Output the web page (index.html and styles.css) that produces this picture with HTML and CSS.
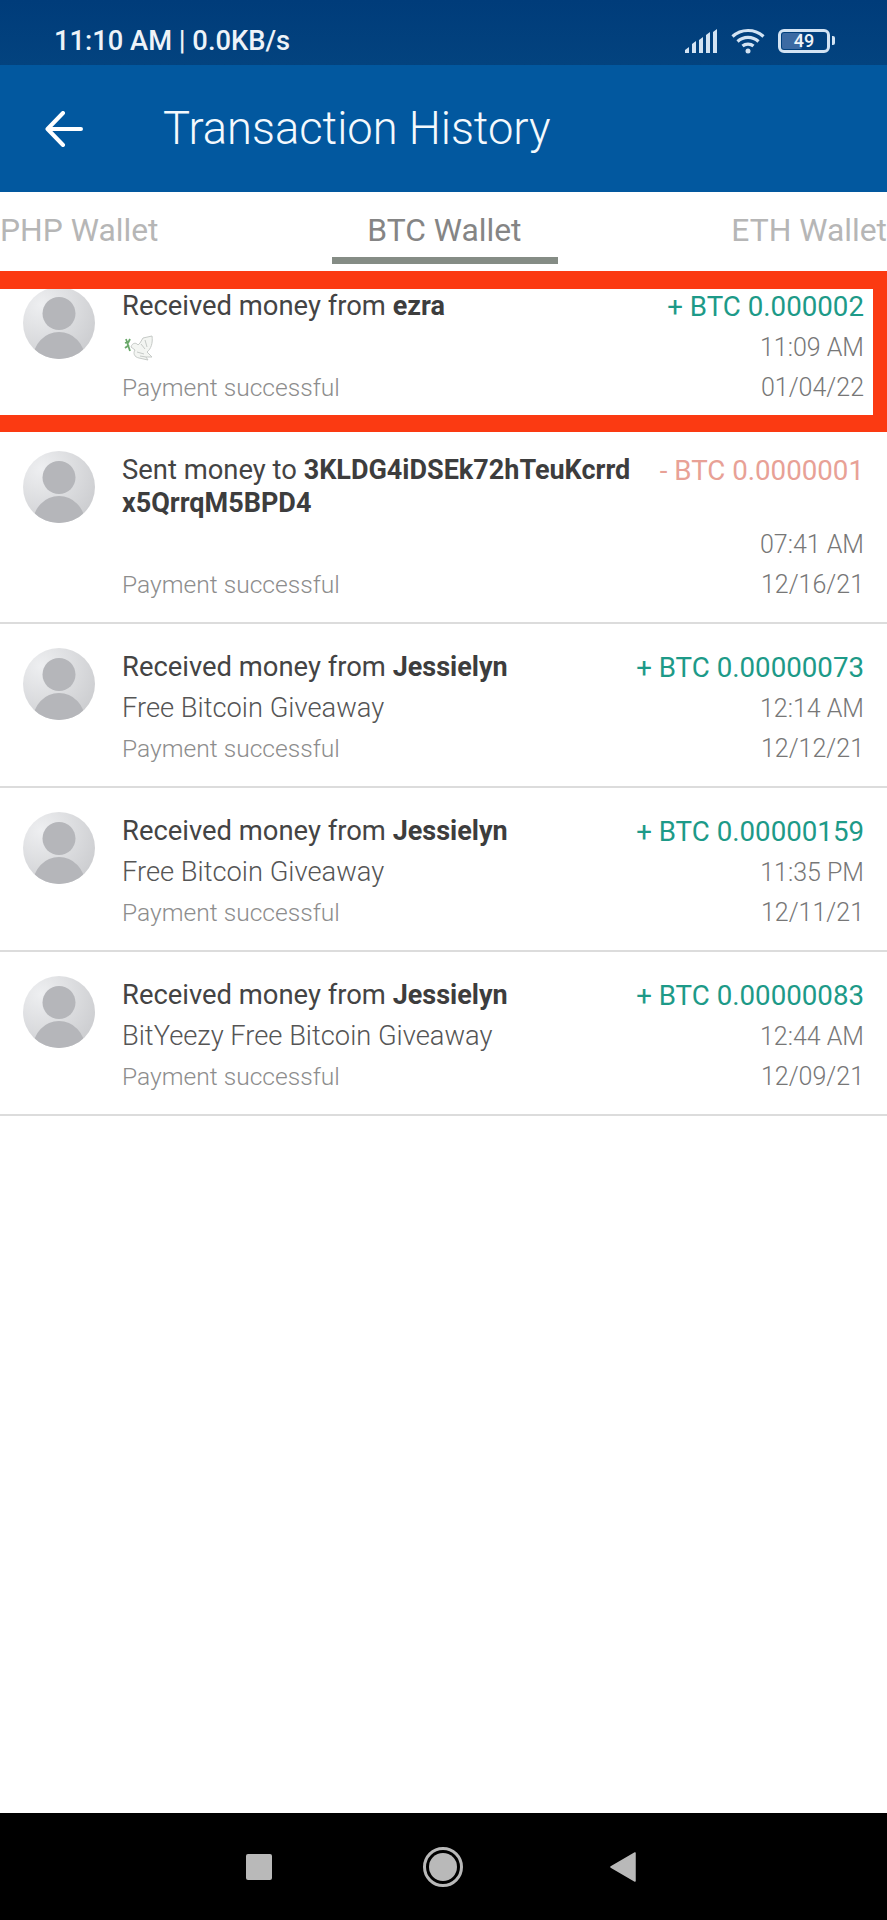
FILE: index.html
```html
<!DOCTYPE html>
<html lang="en">
<head>
<meta charset="utf-8">
<title>Transaction History</title>
<link rel="stylesheet" href="styles.css">
</head>
<body>
<div class="page">
  <svg width="0" height="0" class="defs">
    <defs>
      <radialGradient id="avbg" cx="0.25" cy="0.25" r="0.95">
        <stop offset="0" stop-color="#eeeff1"/>
        <stop offset="1" stop-color="#c9cacd"/>
      </radialGradient>
      <clipPath id="avclip"><circle cx="36" cy="36" r="36"/></clipPath>
      <symbol id="avatar" viewBox="0 0 72 72">
        <circle cx="36" cy="36" r="36" fill="url(#avbg)"/>
        <g clip-path="url(#avclip)" fill="#b5b6ba">
          <circle cx="36" cy="26.5" r="16.5"/>
          <ellipse cx="36" cy="72" rx="26" ry="27"/>
        </g>
      </symbol>
    </defs>
  </svg>

  <div class="status">
    <span class="status-text">11:10 AM | 0.0KB/s</span>
    <div class="status-icons">
      <svg class="ic-signal" width="33" height="24" viewBox="0 0 33 24" fill="#d3e3f3">
        <path d="M0 24v-3l4-3v6zM7 24v-9l4-3v12zM14 24V11l4-3v16zM21 24V6l4-3v21zM28 24V3l4-3v24z"/>
      </svg>
      <svg class="ic-wifi" width="34" height="26" viewBox="0 0 34 26" fill="none" stroke="#d3e3f3" stroke-width="3.2">
        <path d="M1.5 8.5C10 .5 24 .5 32.500 8.500"/>
        <path d="M6.500 13.500C12.500 8 21.500 8 27.500 13.500"/>
        <path d="M11.500 18C14.500 15.500 19.500 15.500 22.500 18"/>
        <circle cx="17" cy="23" r="2.500" fill="#d3e3f3" stroke="none"/>
      </svg>
      <div class="battery">
        <div class="battery-body"><span class="battery-fill"></span><span class="battery-num">49</span></div>
        <span class="battery-tip"></span>
      </div>
    </div>
  </div>

  <header class="appbar">
    <svg class="back" width="38" height="36" viewBox="0 0 38 36" fill="none" stroke="#fff" stroke-width="4" stroke-linecap="round" stroke-linejoin="round">
      <path d="M36 18H3M18 2 2.500 18 18 34"/>
    </svg>
    <h1 class="title">Transaction History</h1>
  </header>

  <nav class="tabs">
    <div class="tab">PHP Wallet</div>
    <div class="tab tab-active">BTC Wallet</div>
    <div class="tab">ETH Wallet</div>
  </nav>

  <main class="list">
    <div class="row">
      <svg class="avatar"><use href="#avatar"/></svg>
      <div class="line-title">Received money from <b>ezra</b></div>
      <div class="amount plus">+ BTC 0.000002</div>
      <div class="line-sub">
        <svg class="dove" width="33" height="26" viewBox="0 0 33 26">
          <path d="M9 12C10 8 14 7 16 10L18 8 21 3 30 1C31 8 29 14 25 17L30 22H24L26 25 17 23C12 22 11 18 13 15Z" fill="#f3f5f2" stroke="#c6cac7" stroke-width="1"/>
          <path d="M19 9 23 14M23 5 25 12M15 17 22 19M18 21 24 22" stroke="#c6cac7" stroke-width="1" fill="none"/>
          <path d="M4 4 8 16M3 8 6 7M3 13 7 10M8 4 6 8" stroke="#6aa86a" stroke-width="1.800" fill="none"/>
        </svg>
      </div>
      <div class="meta">11:09 AM</div>
      <div class="line-status">Payment successful</div>
      <div class="meta">01/04/22</div>
    </div>

    <div class="row">
      <svg class="avatar"><use href="#avatar"/></svg>
      <div class="line-title">Sent money to <b>3KLDG4iDSEk72hTeuKcrrd<br>x5QrrqM5BPD4</b></div>
      <div class="amount minus">- BTC 0.0000001</div>
      <div class="line-sub"></div>
      <div class="meta">07:41 AM</div>
      <div class="line-status">Payment successful</div>
      <div class="meta">12/16/21</div>
    </div>

    <div class="row">
      <svg class="avatar"><use href="#avatar"/></svg>
      <div class="line-title">Received money from <b>Jessielyn</b></div>
      <div class="amount plus">+ BTC 0.00000073</div>
      <div class="line-sub">Free Bitcoin Giveaway</div>
      <div class="meta">12:14 AM</div>
      <div class="line-status">Payment successful</div>
      <div class="meta">12/12/21</div>
    </div>

    <div class="row">
      <svg class="avatar"><use href="#avatar"/></svg>
      <div class="line-title">Received money from <b>Jessielyn</b></div>
      <div class="amount plus">+ BTC 0.00000159</div>
      <div class="line-sub">Free Bitcoin Giveaway</div>
      <div class="meta">11:35 PM</div>
      <div class="line-status">Payment successful</div>
      <div class="meta">12/11/21</div>
    </div>

    <div class="row">
      <svg class="avatar"><use href="#avatar"/></svg>
      <div class="line-title">Received money from <b>Jessielyn</b></div>
      <div class="amount plus">+ BTC 0.00000083</div>
      <div class="line-sub">BitYeezy Free Bitcoin Giveaway</div>
      <div class="meta">12:44 AM</div>
      <div class="line-status">Payment successful</div>
      <div class="meta">12/09/21</div>
    </div>
  </main>

  <footer class="navbar">
    <span class="nav-square"></span>
    <span class="nav-circle"><span class="nav-dot"></span></span>
    <svg class="nav-back" width="26" height="30" viewBox="0 0 26 30"><path d="M25 1v28L1 15z" fill="#b9b9b9" stroke="#b9b9b9" stroke-width="1.500" stroke-linejoin="round"/></svg>
  </footer>

  <div class="highlight"></div>
</div>
</body>
</html>
```

FILE: styles.css
```css
* { box-sizing: border-box; }

html, body {
  margin: 0;
  padding: 0;
  background: #fff;
}

.page {
  position: relative;
  width: 887px;
  height: 1920px;
  display: flex;
  flex-direction: column;
  overflow: hidden;
  font-family: Roboto, "Liberation Sans", sans-serif;
}

.defs { position: absolute; }

.status {
  height: 65px;
  flex: none;
  display: flex;
  align-items: center;
  justify-content: space-between;
  padding: 16px 52px 0 54px;
  background: linear-gradient(#003c7a, #03437f);
  color: #eef3f8;
}

.status-text {
  font-size: 27.3px;
  font-weight: 500;
}

.status-icons {
  display: flex;
  align-items: center;
  gap: 13px;
  height: 26px;
}

.battery {
  display: flex;
  align-items: center;
  gap: 2px;
}

.battery-body {
  position: relative;
  width: 52px;
  height: 24px;
  border: 3px solid #d3e3f3;
  border-radius: 6px;
  display: flex;
  align-items: center;
  justify-content: center;
}

.battery-fill {
  position: absolute;
  left: 1px;
  top: 1px;
  bottom: 1px;
  width: 20px;
  background: #3c6aa3;
  border-radius: 2px;
}

.battery-num {
  position: relative;
  font-size: 18px;
  font-weight: 500;
  color: #eef3f8;
  line-height: 1;
}

.battery-tip {
  width: 3px;
  height: 9px;
  background: #d3e3f3;
  border-radius: 0 2px 2px 0;
}

.appbar {
  height: 127px;
  flex: none;
  display: flex;
  align-items: center;
  padding-left: 45px;
  background: #02589f;
  color: #f4f9fd;
}

.back {
  flex: none;
  margin-right: 80px;
}

.title {
  margin: 0;
  font-size: 45.3px;
  font-weight: 300;
  line-height: 1;
}

.tabs {
  height: 71px;
  flex: none;
  display: flex;
  justify-content: space-between;
  align-items: stretch;
  background: #fff;
  font-size: 31.8px;
  color: #b6b6b6;
}

.tab {
  padding-top: 20px;
  line-height: 36px;
}

.tab-active {
  padding: 20px 36px 0 35px;
  color: #858585;
  border-bottom: 7px solid #858c85;
  height: 72px;
}

.list {
  flex: 1;
}

.row {
  display: grid;
  grid-template-columns: 72px 1fr auto;
  column-gap: 27px;
  padding: 27px 23px 21px;
  border-bottom: 2px solid #dcdcdc;
}

.avatar {
  grid-row: 1 / span 3;
  width: 72px;
  height: 72px;
  margin-top: -3px;
}

.line-title {
  font-size: 27.4px;
  line-height: 33px;
  color: #444;
  white-space: nowrap;
}

.line-title b {
  font-size: 27px;
  font-weight: 700;
  color: #3d3d3d;
}

.amount {
  font-size: 27.7px;
  line-height: 33px;
  text-align: right;
  white-space: nowrap;
}

.plus { color: #1d9a88; }
.minus { color: #e8a196; }

.line-sub {
  grid-column: 2;
  height: 33px;
  margin-top: 8px;
  font-size: 27.3px;
  font-weight: 300;
  line-height: 33px;
  color: #555;
  display: flex;
  align-items: center;
}

.meta {
  grid-column: 3;
  font-size: 25px;
  font-weight: 300;
  line-height: 33px;
  text-align: right;
  color: #777;
  margin-top: 8px;
}

.meta:last-child {
  margin-top: 7px;
}

.line-status {
  grid-column: 2;
  margin-top: 7px;
  font-size: 24.6px;
  font-weight: 300;
  line-height: 33px;
  color: #8d8d8d;
}

.navbar {
  height: 107px;
  flex: none;
  display: flex;
  align-items: center;
  gap: 150px;
  padding-left: 246px;
  background: #000;
}

.nav-square {
  width: 26px;
  height: 26px;
  background: #b9b9b9;
  border-radius: 2px;
}

.nav-circle {
  width: 40px;
  height: 40px;
  margin-left: 1px;
  margin-right: -3px;
  border: 3px solid #b9b9b9;
  border-radius: 50%;
  display: flex;
  align-items: center;
  justify-content: center;
}

.nav-dot {
  width: 28px;
  height: 28px;
  background: #b9b9b9;
  border-radius: 50%;
}

.highlight {
  position: absolute;
  left: -20px;
  top: 271px;
  width: 907px;
  height: 161px;
  border: solid #fb3a12;
  border-width: 18px 14px 17px 0;
}
```
